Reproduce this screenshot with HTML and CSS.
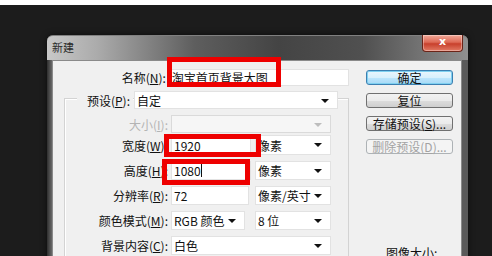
FILE: index.html
```html
<!DOCTYPE html>
<html lang="zh-CN">
<head>
  <meta charset="UTF-8" />
  <title>新建</title>
  <link rel="stylesheet" href="styles.css">
</head>
<body>
  <div class="strip"></div>
  <div class="window">
    <div class="titlebar">
      <span class="title">新建</span>
      <span class="close">x</span>
    </div>
    <div class="frame">
      <div class="client">
        <div class="form">
          <div class="row row-name">
            <label class="lbl">名称(<u>N</u>):</label>
            <div class="field name">淘宝首页背景大图</div>
          </div>

          <div class="group">
            <div class="row row-preset">
              <label class="lbl preset-lbl">预设(<u>P</u>):</label>
              <div class="field select preset">自定</div>
            </div>
            <div class="row row-size">
              <label class="lbl off">大小(<u>I</u>):</label>
              <div class="field select off-field w160"></div>
            </div>
            <div class="row row-first">
              <label class="lbl">宽度(<u>W</u>):</label>
              <div class="field w80">1920</div>
              <div class="field select w76">像素</div>
            </div>
            <div class="row">
              <label class="lbl">高度(<u>H</u>):</label>
              <div class="field w80">1080<span class="caret"></span></div>
              <div class="field select w76">像素</div>
            </div>
            <div class="row">
              <label class="lbl">分辨率(<u>R</u>):</label>
              <div class="field w78">72</div>
              <div class="field select w76 push">像素/英寸</div>
            </div>
            <div class="row">
              <label class="lbl">颜色模式(<u>M</u>):</label>
              <div class="field select w74">RGB 颜色</div>
              <div class="field select w76 push2">8 位</div>
            </div>
            <div class="row">
              <label class="lbl">背景内容(<u>C</u>):</label>
              <div class="field select w160">白色</div>
            </div>
          </div>
        </div>

        <div class="side">
          <button class="btn primary">确定</button>
          <button class="btn">复位</button>
          <button class="btn">存储预设(<u>S</u>)...</button>
          <button class="btn disabled">删除预设(<u>D</u>)...</button>
          <div class="info">图像大小:</div>
        </div>
      </div>
    </div>

    <!-- red marks drawn over the dialog -->
    <div class="mark mark-name"></div>
    <div class="mark mark-width"></div>
    <div class="mark mark-height"></div>
  </div>
</body>
</html>
```

FILE: styles.css
```css
body {
  margin: 0;
  width: 492px;
  height: 256px;
  overflow: hidden;
  background: #1c1c1c;
  font-family: "Noto Sans CJK SC", "Noto Sans", sans-serif;
  font-size: 12px;
  color: #111;
}
.strip {
  height: 5px;
  background: #fff;
}
.window {
  position: relative;
  width: 421px;
  margin: 30px 0 0 47px;
  border-radius: 6px 6px 0 0;
  background: #484848;
  box-shadow: 0 0 6px rgba(0,0,0,0.6);
}
.titlebar {
  height: 24px;
  display: flex;
  justify-content: space-between;
  border-radius: 6px 6px 0 0;
  background: linear-gradient(90deg, #c8c8c8 0, #ababab 12%, #5e5e5e 35%, #444 55%, #505050 75%, #909090 100%);
  border-top: 1px solid #808080;
}
.title {
  padding: 3px 0 0 5px;
  font-size: 11px;
  line-height: 16px;
  color: #2a2a2a;
}
.close {
  width: 39px;
  height: 16px;
  margin-right: 5px;
  margin-top: -1px;
  border: 1px solid #6b2418;
  border-top: none;
  border-radius: 0 0 4px 4px;
  background: linear-gradient(#f0a898 0, #de6a56 45%, #c8402c 55%, #e27a64 100%);
  box-shadow: inset 0 0 0 1px rgba(255,255,255,0.35);
  color: #fff;
  font-family: "DejaVu Sans", sans-serif;
  font-weight: bold;
  font-size: 11px;
  line-height: 14px;
  text-align: center;
}
.frame {
  padding: 0 6px 0 5px;
  background: linear-gradient(90deg, #2e2e2e 0, #6a6a6a 5px, #5a5a5a 100%);
}
.client {
  display: flex;
  height: 200px;
  background: #f0f0f0;
  border: 1px solid #8a8a8a;
  border-bottom: none;
}
.form {
  width: 296px;
  padding-top: 7px;
}
.row {
  display: flex;
  align-items: center;
  height: 19px;
}
.lbl {
  width: 103px;
  padding-right: 3px;
  text-align: right;
  white-space: nowrap;
}
.row-name .lbl {
  width: 114px;
}
.field {
  height: 100%;
  box-sizing: border-box;
  display: flex;
  align-items: center;
  padding-left: 2px;
  background: #fff;
  border: 1px solid #e2e2e2;
  white-space: nowrap;
  position: relative;
}
.name {
  width: 182px;
  height: 17px;
}
.select::after {
  content: "";
  position: absolute;
  right: 8px;
  top: 7px;
  border-left: 4px solid transparent;
  border-right: 4px solid transparent;
  border-top: 4px solid #111;
}
.group {
  margin: 11px 0 0 11px;
  width: 283px;
  height: 200px;
  border: 1px solid #d3d3d3;
  border-bottom: none;
  box-shadow: inset 1px 1px 0 #fff;
}
.row-preset {
  margin-top: -8px;
  height: 18px;
}
.preset-lbl {
  width: 53px;
  margin-left: 12px;
  padding-right: 3px;
  background: #f0f0f0;
}
.preset {
  width: 204px;
  margin-left: 1px;
}
.row-size {
  margin-top: 7px;
  height: 18px;
}
.off {
  color: #b4b4b4;
}
.off-field {
  background: #f6f6f6;
  border-color: #dadada;
}
.off-field::after {
  border-top-color: #bdbdbd;
}
.row + .row {
  margin-top: 6px;
}
.row-first {
  height: 20px;
  margin-top: 2px !important;
}
.w160 { width: 160px; }
.w80 { width: 80px; }
.w78 { width: 78px; }
.w76 { width: 76px; margin-left: 4px; }
.w74 { width: 74px; }
.push { margin-left: 6px; }
.push2 { margin-left: 10px; }
.caret {
  display: inline-block;
  width: 1px;
  height: 13px;
  background: #111;
}
.side {
  width: 87px;
  margin-left: 17px;
  padding-top: 9px;
  display: flex;
  flex-direction: column;
  gap: 8px;
}
.btn {
  height: 15px;
  padding: 0;
  font: inherit;
  line-height: 13px;
  color: #111;
  border: 1px solid #707070;
  border-radius: 3px;
  background: linear-gradient(#f2f2f2 0, #ebebeb 50%, #dddddd 51%, #cfcfcf 100%);
}
.btn.primary {
  border-color: #3c7fb1;
  background: linear-gradient(#eaf6fd 0, #d9f0fc 50%, #bee6fd 51%, #a7d9f5 100%);
  box-shadow: inset 0 0 0 1px #7fd0f0;
}
.btn.disabled {
  color: #a3a3a3;
  border-color: #adb2b5;
  background: #f4f4f4;
}
.info {
  margin-top: 82px;
  padding-left: 20px;
}
.mark {
  position: absolute;
  border: 5px solid #ee0000;
  box-sizing: border-box;
}
.mark-name {
  left: 120px;
  top: 22px;
  width: 114px;
  height: 30px;
}
.mark-width {
  left: 117px;
  top: 99px;
  width: 97px;
  height: 23px;
}
.mark-height {
  left: 115px;
  top: 124px;
  width: 88px;
  height: 26px;
}
```
